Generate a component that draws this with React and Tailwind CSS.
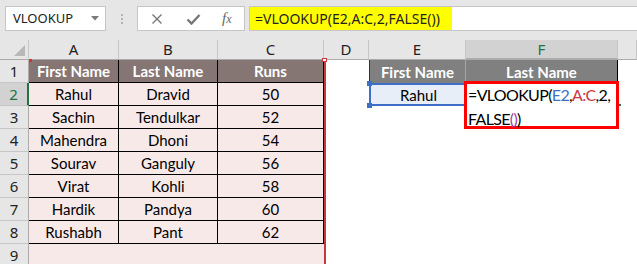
import React from 'react'

const players = [
    ['Rahul', 'Dravid', 50],
    ['Sachin', 'Tendulkar', 52],
    ['Mahendra', 'Dhoni', 54],
    ['Sourav', 'Ganguly', 56],
    ['Virat', 'Kohli', 58],
    ['Hardik', 'Pandya', 60],
    ['Rushabh', 'Pant', 62],
]

const colLetters = ['A', 'B', 'C', 'D', 'E', 'F', '']

function ColHeader({ letter }) {
    const active = letter === 'F'
    return (
        <div
            className={`flex items-center justify-center text-[15px] leading-none border-b border-r border-b-[#ababab] border-r-[#c6c6c6] ${active
                ? 'bg-[#d2d2d2] text-[#217346] border-b-2 border-b-[#217346]'
                : 'bg-[#e6e6e6] text-[#222]'
                }`}
        >
            {letter}
        </div>
    )
}

function RowHeader({ n }) {
    const active = n === 2
    return (
        <div
            className={`flex items-center justify-center text-[15px] leading-none border-b border-[#c6c6c6] ${active
                ? 'bg-[#d2d2d2] text-[#217346] border-r-2 border-r-[#217346]'
                : 'bg-[#e6e6e6] text-[#222] border-r border-r-[#ababab]'
                }`}
        >
            {n}
        </div>
    )
}

function Cell({ children, className = '' }) {
    return (
        <div className={`flex items-center justify-center pt-[1px] font-['Lato'] text-[15px] text-black ${className}`}>
            {children}
        </div>
    )
}

export default function App() {
    return (
        <div className="relative w-[637px] h-[264px] overflow-hidden bg-white font-['Noto_Sans',sans-serif]">
            {/* formula bar */}
            <div className="flex h-[40px] items-start bg-[#e6e6e6] pt-[6px]">
                <div className="ml-[5px] flex h-[25px] w-[101px] items-center justify-between border border-[#c6c6c6] bg-white pl-[7px] pr-[6px]">
                    <span className="text-[13px] text-[#222]">VLOOKUP</span>
                    <svg width="8" height="5" viewBox="0 0 8 5">
                        <path d="M0 0h8L4 4.5z" fill="#7a7a7a" />
                    </svg>
                </div>
                <div className="flex h-[25px] w-[31px] flex-col items-center justify-center gap-[2px]">
                    <span className="h-[2px] w-[2px] bg-[#b4b4b4]" />
                    <span className="h-[2px] w-[2px] bg-[#b4b4b4]" />
                    <span className="h-[2px] w-[2px] bg-[#b4b4b4]" />
                </div>
                <div className="flex h-[25px] w-[108px] items-center border border-[#c6c6c6] bg-white">
                    <svg className="ml-[13px]" width="12" height="12" viewBox="0 0 12 12">
                        <path d="M1.5 1.5l9 9M10.5 1.5l-9 9" stroke="#777" strokeWidth="1.4" />
                    </svg>
                    <svg className="ml-[23px]" width="15" height="12" viewBox="0 0 15 12">
                        <path d="M1.5 6.5l4 4 8-8.5" stroke="#777" strokeWidth="2.4" fill="none" />
                    </svg>
                    <span className="ml-[21px] font-['Liberation_Serif'] text-[15px] italic text-[#666] leading-none">
                        f<span className="text-[12px]">x</span>
                    </span>
                </div>
                <div className="ml-[4px] flex h-[25px] flex-1 items-stretch border-y border-l border-[#c6c6c6] bg-white">
                    <div className="flex items-center bg-[#ffff00] pl-[5px] pr-[12px] text-[14px] text-[#222]">
                        =VLOOKUP(E2,A:C,2,FALSE())
                    </div>
                </div>
            </div>

            {/* sheet */}
            <div className="grid grid-cols-[29px_90px_99px_106px_45px_97px_152px_19px] grid-rows-[20px_repeat(9,23px)]">
                <div className="flex items-end justify-end border-b border-r border-b-[#ababab] border-r-[#c6c6c6] bg-[#e6e6e6] pb-[3px] pr-[3px]">
                    <svg width="11" height="11" viewBox="0 0 11 11">
                        <path d="M11 0v11H0z" fill="#b8b8b8" />
                    </svg>
                </div>
                {colLetters.map((l, i) => (
                    <ColHeader key={i} letter={l} />
                ))}

                {/* row 1 */}
                <RowHeader n={1} />
                <Cell className="bg-[#857674] font-bold text-white border-r border-b border-black">First Name</Cell>
                <Cell className="bg-[#857674] font-bold text-white border-r border-b border-black">Last Name</Cell>
                <Cell className="bg-[#857674] font-bold text-white border-r border-b border-black">Runs</Cell>
                <div />
                <Cell className="bg-[#808080] font-bold text-white border-l border-l-[#333] border-r border-r-[#a6a6a6]">First Name</Cell>
                <Cell className="bg-[#808080] font-bold text-white border-r border-black">Last Name</Cell>
                <div />

                {/* rows 2-8 */}
                {players.map((p, i) => (
                    <React.Fragment key={p[0]}>
                        <RowHeader n={i + 2} />
                        <Cell className="bg-[#f8e9e9] border-r border-b border-black">{p[0]}</Cell>
                        <Cell className="bg-[#f8e9e9] border-r border-b border-black">{p[1]}</Cell>
                        <Cell className="bg-[#f8e9e9] border-r border-b border-black">{p[2]}</Cell>
                        <div />
                        {i === 0 ? (
                            <Cell className="bg-[#e8eef8] border-y-2 border-l-2 border-[#3d6fc6]">Rahul</Cell>
                        ) : (
                            <div />
                        )}
                        <div />
                        <div />
                    </React.Fragment>
                ))}

                {/* row 9 */}
                <RowHeader n={9} />
                <div className="col-span-3 bg-[#f8e9e9]" />
                <div className="col-span-4" />
            </div>

            {/* A:C reference outline */}
            <div className="absolute left-[324px] top-[60px] h-[210px] w-[2px] bg-[#c8373e]" />
            <div className="absolute left-[29px] top-[59px] h-[3px] w-[3px] bg-[#c8373e]" />
            <div className="absolute left-[322px] top-[58px] h-[4px] w-[5px] border border-[#c8373e] bg-white" />

            {/* E2 handles */}
            <div className="absolute left-[367px] top-[81px] h-[5px] w-[5px] bg-[#3d6fc6]" />
            <div className="absolute left-[367px] top-[103px] h-[5px] w-[5px] bg-[#3d6fc6]" />

            {/* fill handle peek */}
            <div className="absolute left-[619px] top-[104px] h-[2px] w-[2px] bg-[#217346]" />

            {/* F2 in edit mode */}
            <div className="absolute left-[464px] top-[81px] h-[48px] w-[155px] border-[3px] border-[#ff0000] bg-white pl-[1px] font-['Lato'] text-[16px] leading-[24px] tracking-[-0.65px] text-black">
                <div className="-mt-[1px]">
                    =VLOOKUP(<span className="text-[#3d6fc6]">E2</span>,<span className="text-[#c8373e]">A:C</span>,2,
                </div>
                <div>
                    FALSE<span className="text-[#9b3fa0]">()</span>)
                </div>
            </div>
        </div>
    )
}
